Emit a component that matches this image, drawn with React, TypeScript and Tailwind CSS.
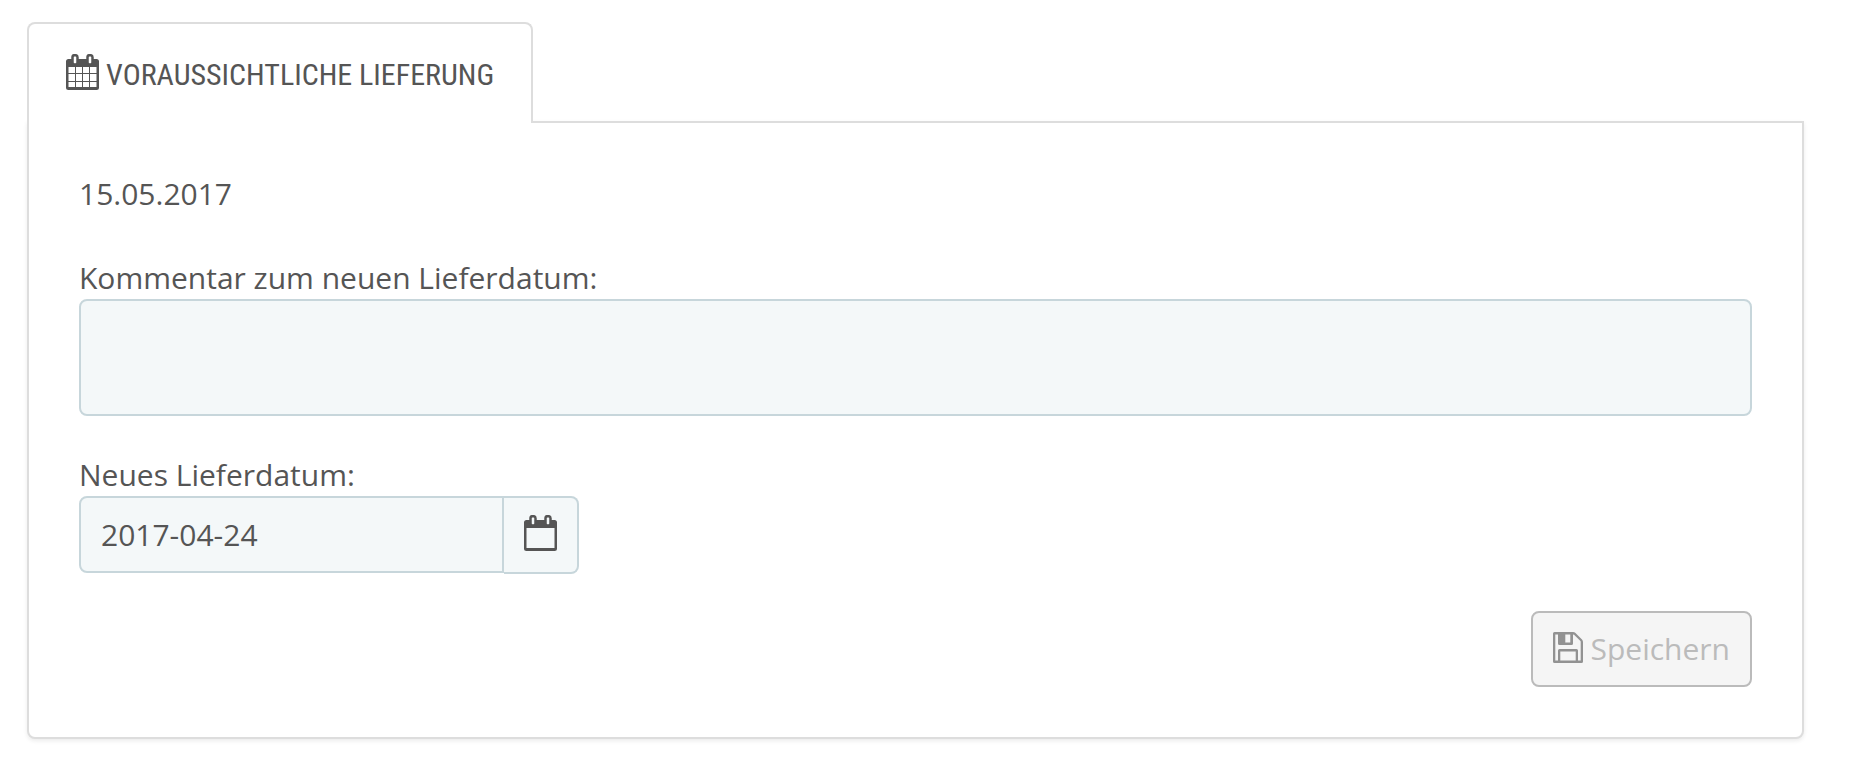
import { useState } from 'react'

function CalendarGridIcon() {
  return (
    <svg aria-hidden="true" className="h-9 w-[33px] shrink-0" viewBox="0 0 33 36" fill="none">
      <path
        fill="currentColor"
        fillRule="evenodd"
        d="M2.500 5H30.500Q33 5 33 7.500V33.500Q33 36 30.500 36H2.500Q0 36 0 33.500V7.500Q0 5 2.500 5ZM2.500 13V19H9V13ZM10 13V19H16V13ZM17 13V19H23V13ZM24 13V19H30.500V13ZM2.500 20V27H9V20ZM10 20V27H16V20ZM17 20V27H23V20ZM24 20V27H30.500V20ZM2.500 28V33H9V28ZM10 28V33H16V28ZM17 28V33H23V28ZM24 28V33H30.500V28Z"
      />
      <rect x="6.500" y="1.200" width="5" height="9.300" rx="2" fill="#fff" stroke="currentColor" strokeWidth="2.500" />
      <rect x="21.500" y="1.200" width="5" height="9.300" rx="2" fill="#fff" stroke="currentColor" strokeWidth="2.500" />
    </svg>
  )
}

function CalendarIcon() {
  return (
    <svg aria-hidden="true" className="h-9 w-[33px] shrink-0" viewBox="0 0 33 36" fill="none">
      <path
        fill="currentColor"
        fillRule="evenodd"
        d="M2.500 5H30.500Q33 5 33 7.500V33.500Q33 36 30.500 36H2.500Q0 36 0 33.500V7.500Q0 5 2.500 5ZM2.500 13V33H30.500V13Z"
      />
      <rect x="6.500" y="1.200" width="5" height="9.300" rx="2" fill="#f4f8f9" stroke="currentColor" strokeWidth="2.500" />
      <rect x="21.500" y="1.200" width="5" height="9.300" rx="2" fill="#f4f8f9" stroke="currentColor" strokeWidth="2.500" />
    </svg>
  )
}

function SaveIcon() {
  return (
    <svg aria-hidden="true" className="h-[31px] w-[30px] shrink-0" viewBox="0 0 30 31" fill="none">
      <path
        fill="currentColor"
        fillRule="evenodd"
        d="M1.500 0H20Q21.500 0 22.500 1L29 7.500Q30 8.500 30 10V29.500Q30 31 28.500 31H1.500Q0 31 0 29.500V1.500Q0 0 1.500 0ZM2.300 2.500V28.500H5V18.500Q5 17 6.500 17H23.500Q25 17 25 18.500V28.500H27.700V10Q27.700 9.300 27.200 8.800L21.800 3.400Q21.300 2.700 20 2.500V11.500Q20 13 18.500 13H6.500Q5 13 5 11.500V2.500ZM12.300 2.500V10.500H17.300V2.500ZM7.300 19.500V28.500H22.700V19.500Z"
      />
    </svg>
  )
}

export default function App() {
  const [comment, setComment] = useState('')
  const [date, setDate] = useState('2017-04-24')

  return (
    <main className="bg-white px-[27px] pt-[22px] pr-12 pb-4 font-['Open_Sans','Noto_Sans',sans-serif] text-[30px] leading-10 text-[#555]">
      <div className="flex">
        <div className="z-10 -mb-0.5 rounded-t-lg border-2 border-b-0 border-[#ddd] bg-white pb-0.5">
          <h1 className="flex h-[97px] items-center gap-[7px] px-[37px] pt-1 font-['Ubuntu_Condensed','Roboto_Condensed','Open_Sans_Condensed',sans-serif] text-[30px] uppercase">
            <span className="pb-1.5">
              <CalendarGridIcon />
            </span>
            Voraussichtliche Lieferung
          </h1>
        </div>
      </div>
      <section className="rounded-b-lg border-2 border-[#ddd] bg-white px-[50px] pt-[51px] pb-[50px] shadow-[0_2px_4px_rgba(0,0,0,0.08)]">
        <p className="mb-11">15.05.2017</p>
        <form onSubmit={(e) => e.preventDefault()}>
          <label htmlFor="comment" className="mb-px block">
            Kommentar zum neuen Lieferdatum:
          </label>
          <textarea
            id="comment"
            value={comment}
            onChange={(e) => setComment(e.target.value)}
            className="mb-[39px] block h-[117px] w-full resize-none rounded-lg border-2 border-[#c7d6db] bg-[#f4f8f9] px-5 py-3 outline-none"
          />
          <label htmlFor="date" className="mb-px block">
            Neues Lieferdatum:
          </label>
          <div className="mb-[37px] flex w-[500px] items-start">
            <input
              id="date"
              type="text"
              value={date}
              onChange={(e) => setDate(e.target.value)}
              className="h-[77px] min-w-0 flex-1 rounded-l-lg border-2 border-[#c7d6db] bg-[#f4f8f9] px-5 outline-none"
            />
            <button
              type="button"
              aria-label="Kalender"
              className="flex h-[78px] w-[75px] items-center justify-center rounded-r-lg border-2 border-l-0 border-[#c7d6db] bg-[#f4f8f9] pb-1"
            >
              <CalendarIcon />
            </button>
          </div>
          <div className="flex justify-end">
            <button
              type="submit"
              disabled
              className="flex h-[76px] items-center gap-2 rounded-lg border-2 border-[#bbb] bg-[#f5f5f5] px-5 text-[#bbb]"
            >
              <span className="pb-1 text-[#929292]">
                <SaveIcon />
              </span>
              Speichern
            </button>
          </div>
        </form>
      </section>
    </main>
  )
}
